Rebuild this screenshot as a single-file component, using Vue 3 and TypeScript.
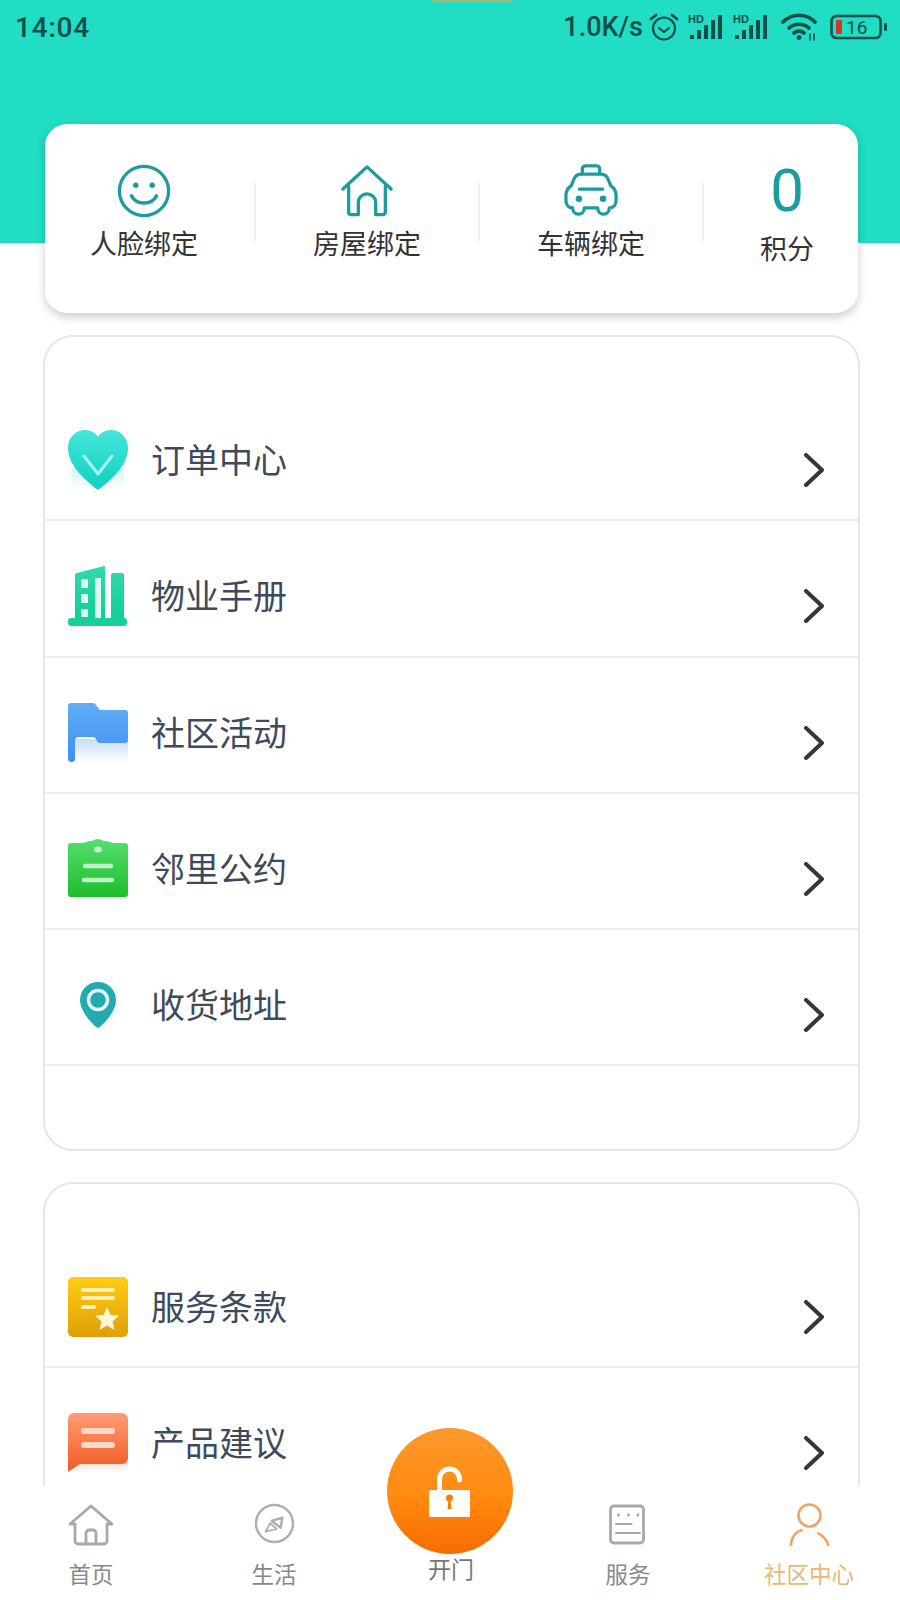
<script setup lang="ts">
const bindings = [
  { key: 'face', label: '人脸绑定' },
  { key: 'house', label: '房屋绑定' },
  { key: 'car', label: '车辆绑定' },
]

const groupOne = [
  { key: 'heart', label: '订单中心' },
  { key: 'building', label: '物业手册' },
  { key: 'flag', label: '社区活动' },
  { key: 'clipboard', label: '邻里公约' },
  { key: 'pin', label: '收货地址' },
]

const groupTwo = [
  { key: 'terms', label: '服务条款' },
  { key: 'bubble', label: '产品建议' },
]

const groups = [
  { id: 'a', rows: groupOne },
  { id: 'b', rows: groupTwo },
]
</script>

<template>
  <div class="page">
    <i class="notch"></i>
    <main class="content">
      <header class="hero">
        <div class="status">
          <span class="clock">14:04</span>
          <div class="status-right">
            <span class="speed">1.0K/s</span>
            <svg class="st-alarm" viewBox="0 0 30 30" fill="none" stroke="#0e4f4a" stroke-width="2.2">
              <circle cx="15" cy="16.5" r="11" />
              <path d="M10 16l5 4 5-4" stroke-linecap="round" stroke-linejoin="round" />
              <path d="M2 7l5-4M28 7l-5-4" stroke-width="2.8" stroke-linecap="round" />
            </svg>
            <svg v-for="n in 2" :key="n" class="st-signal" viewBox="0 0 36 28">
              <text x="0" y="10" class="hd">HD</text>
              <rect x="2" y="22" width="4" height="4" fill="#0e4f4a" />
              <rect x="9" y="17" width="4" height="9" fill="#0e4f4a" />
              <rect x="16" y="12" width="4" height="14" fill="#0e4f4a" />
              <rect x="23" y="7" width="4" height="19" fill="#0e4f4a" />
              <rect x="30" y="2" width="4" height="24" fill="#0e4f4a" />
            </svg>
            <svg class="st-wifi" viewBox="0 0 38 28" fill="none" stroke="#0e4f4a" stroke-width="3.6" stroke-linecap="round">
              <path d="M2 9C11 0 25 0 34 9" />
              <path d="M8 15c6-5 14-5 20 0" />
              <path d="M13 20c3-2.500 7-2.500 10 0" />
              <circle cx="18" cy="24.500" r="2.400" fill="#0e4f4a" stroke="none" />
              <path d="M29 21v6M33 21v6" stroke-width="1.600" />
            </svg>
            <svg class="st-battery" viewBox="0 0 58 26">
              <rect x="1.500" y="2" width="49" height="22" rx="5" fill="none" stroke="#0e4f4a" stroke-width="2.600" />
              <rect x="6" y="6" width="6" height="14" rx="1" fill="#d8332b" />
              <text x="16" y="20" class="batt">16</text>
              <rect x="54" y="9" width="3" height="8" rx="1.500" fill="#0e4f4a" />
            </svg>
          </div>
        </div>
      </header>

      <section class="bind-card">
        <template v-for="(b, i) in bindings" :key="b.key">
          <div class="bind-cell" :class="{ first: i === 0 }">
            <svg class="bind-icon" viewBox="0 0 56 56" fill="none" stroke="#1c9c9c" stroke-width="3.400" stroke-linecap="round" stroke-linejoin="round">
              <template v-if="b.key === 'face'">
                <circle cx="28" cy="28" r="25.500" />
                <circle cx="19.500" cy="22" r="2.800" fill="#1c9c9c" stroke="none" />
                <circle cx="36.500" cy="22" r="2.800" fill="#1c9c9c" stroke="none" />
                <path d="M15 33c5 10 21 10 26 0" stroke-width="3.600" />
              </template>
              <template v-else-if="b.key === 'house'">
                <path d="M3 26L28 3l25 23" />
                <path d="M9 23v27a2.500 2.500 0 0 0 2.500 2.500H19V40a9 9 0 0 1 18 0v12.500h7.500A2.500 2.500 0 0 0 47 50V23" />
              </template>
              <template v-else>
                <path d="M19 10V5a3 3 0 0 1 3-3h12a3 3 0 0 1 3 3v5" />
                <path d="M18 10.500h20c4 0 7 2.500 8 6l2.500 6c3.500 2.500 5.500 6 5.500 10v5c0 5-3 8-7 8 0 4-2.500 6.500-6 6.500s-6-2.500-6-6.500H21c0 4-2.500 6.500-6 6.500s-6-2.500-6-6.500c-4 0-7-3-7-8v-5c0-4 2-7.500 5.500-10l2.500-6c1-3.500 4-6 8-6z" />
                <path d="M16 26h24" />
                <circle cx="15.500" cy="36" r="3.400" fill="#1c9c9c" stroke="none" />
                <circle cx="40.500" cy="36" r="3.400" fill="#1c9c9c" stroke="none" />
              </template>
            </svg>
            <span class="bind-label">{{ b.label }}</span>
          </div>
          <i class="sep"></i>
        </template>
        <div class="bind-cell points">
          <span class="points-num">0</span>
          <span class="bind-label">积分</span>
        </div>
      </section>

      <section v-for="g in groups" :key="g.id" class="list-card">
        <div v-for="r in g.rows" :key="r.key" class="row">
          <svg class="row-icon" viewBox="0 0 60 60">
            <defs>
              <linearGradient :id="'grad-' + r.key" x1="0" y1="0" x2="0" y2="1">
                <stop v-if="r.key === 'heart'" offset="0" stop-color="#45e6da" />
                <stop v-if="r.key === 'heart'" offset="1" stop-color="#0fd0c0" />
                <stop v-if="r.key === 'building'" offset="0" stop-color="#35d9ae" />
                <stop v-if="r.key === 'building'" offset="1" stop-color="#0ecf98" />
                <stop v-if="r.key === 'flag'" offset="0" stop-color="#63aef5" />
                <stop v-if="r.key === 'flag'" offset="1" stop-color="#3b8ff5" />
                <stop v-if="r.key === 'clipboard'" offset="0" stop-color="#55de70" />
                <stop v-if="r.key === 'clipboard'" offset="1" stop-color="#1fbd2b" />
                <stop v-if="r.key === 'terms'" offset="0" stop-color="#ffcd14" />
                <stop v-if="r.key === 'terms'" offset="1" stop-color="#e09f06" />
                <stop v-if="r.key === 'bubble'" offset="0" stop-color="#ff9d74" />
                <stop v-if="r.key === 'bubble'" offset="1" stop-color="#f05a22" />
              </linearGradient>
              <linearGradient :id="'fade-' + r.key" x1="0" y1="0" x2="0" y2="1">
                <stop offset="0" :stop-color="r.key === 'heart' ? '#d2f8f2' : r.key === 'flag' ? '#c6def9' : '#fbd5c4'" />
                <stop offset="1" stop-color="#fff" />
              </linearGradient>
            </defs>
            <template v-if="r.key === 'heart'">
              <rect x="4" y="38" width="52" height="22" :fill="'url(#fade-heart)'" />
              <path :fill="'url(#grad-heart)'" d="M30 60C20 52 0 37 0 18 0 7 8 0 17 0c6 0 11 3 13 7 2-4 7-7 13-7 9 0 17 7 17 18 0 19-20 34-30 42z" />
              <path d="M16 26l14 18 14-18" fill="none" stroke="#a8f3ea" stroke-width="3" stroke-linecap="round" stroke-linejoin="round" />
            </template>
            <template v-else-if="r.key === 'building'">
              <path :fill="'url(#grad-building)'" d="M7 9a2 2 0 0 1 2-2L36 0a1 1 0 0 1 1 1v52H7zM43 9a2 2 0 0 1 2-2h9a2 2 0 0 1 2 2v44H43z" />
              <rect x="0" y="52" width="59" height="8" rx="3" fill="#16cf9b" />
              <rect x="27" y="12" width="6" height="40" fill="#dff8f0" />
              <rect x="13" y="13" width="7" height="9" fill="#dff8f0" />
              <rect x="13" y="28" width="7" height="9" fill="#dff8f0" />
              <rect x="13" y="43" width="7" height="8" fill="#dff8f0" />
            </template>
            <template v-else-if="r.key === 'flag'">
              <rect x="7" y="36" width="53" height="24" :fill="'url(#fade-flag)'" />
              <path :fill="'url(#grad-flag)'" d="M3 0h22a4 4 0 0 1 3 2l3 4a2 2 0 0 0 2 1h24a3 3 0 0 1 3 3v27a3 3 0 0 1-3 3H32a3 3 0 0 1-3-2l-1-2a4 4 0 0 0-3-2H11a4 4 0 0 0-4 4v18a3 3 0 0 1-3.500 3A3.500 3.500 0 0 1 0 56V3a3 3 0 0 1 3-3z" />
            </template>
            <template v-else-if="r.key === 'clipboard'">
              <path :fill="'url(#grad-clipboard)'" d="M3 4h10c4 0 6-2 10-2 2 0 4-2 7-2s5 2 7 2c4 0 6 2 10 2h10a3 3 0 0 1 3 3v48a3 3 0 0 1-3 3H3a3 3 0 0 1-3-3V7a3 3 0 0 1 3-3z" />
              <ellipse cx="30" cy="10.500" rx="4" ry="3" fill="#bdf2c6" />
              <path d="M17 27h26M16 41h28" stroke="#bdf2c6" stroke-width="4.500" stroke-linecap="round" />
            </template>
            <template v-else-if="r.key === 'pin'">
              <path fill="#22aab0" d="M30 53c-2 0-18-15-18-28a18 18 0 0 1 36 0c0 13-16 28-18 28z" />
              <circle cx="30" cy="25" r="9.500" fill="#22aab0" stroke="#e6f7f7" stroke-width="3.500" />
            </template>
            <template v-else-if="r.key === 'terms'">
              <rect width="60" height="60" rx="5" :fill="'url(#grad-terms)'" />
              <path d="M15 13h30M15 21h30M15 30h11" stroke="#ffefb0" stroke-width="4" stroke-linecap="round" />
              <path fill="#fff6d8" d="M39 30l3.500 8 8.500.8-6.400 5.700 1.900 8.500-7.500-4.400-7.500 4.400 1.900-8.500-6.400-5.700 8.500-.8z" />
            </template>
            <template v-else>
              <rect x="6" y="46" width="54" height="14" :fill="'url(#fade-bubble)'" />
              <path :fill="'url(#grad-bubble)'" d="M6 0h48a6 6 0 0 1 6 6v39a6 6 0 0 1-6 6H12L0 59V6a6 6 0 0 1 6-6z" />
              <path d="M16 18h28M16 32h28" stroke="#ffd9c8" stroke-width="6" stroke-linecap="round" />
            </template>
          </svg>
          <span class="row-label">{{ r.label }}</span>
          <svg class="chevron" viewBox="0 0 22 34" fill="none" stroke="#33363b" stroke-width="4" stroke-linecap="round" stroke-linejoin="round">
            <path d="M3 2l16 15L3 32" />
          </svg>
        </div>
      </section>
    </main>

    <nav class="tabbar">
      <div class="tab">
        <svg class="tab-icon" viewBox="0 0 46 44" fill="none" stroke="#a8a8a8" stroke-width="2.800" stroke-linecap="round" stroke-linejoin="round">
          <path d="M23 3L2 21h5v17a3 3 0 0 0 3 3h26a3 3 0 0 0 3-3V21h5z" />
          <path d="M18 41V30a3 3 0 0 1 3-3h4a3 3 0 0 1 3 3v11" />
        </svg>
        <span>首页</span>
      </div>
      <div class="tab">
        <svg class="tab-icon" viewBox="0 0 46 44" fill="none" stroke="#aeaeae" stroke-width="2.400" stroke-linejoin="round">
          <circle cx="23.500" cy="20.500" r="18.500" />
          <path d="M20.700 18l10.600-3.300-1.600 10z" stroke-width="2.400" />
          <path d="M14.700 28.700L19 20.300l6.700 5.700z" stroke-width="1.800" />
        </svg>
        <span>生活</span>
      </div>
      <div class="tab center">
        <div class="open-btn">
          <svg class="lock" viewBox="0 0 42 54">
            <path d="M10.500 28V14a10 10 0 0 1 20 0v1" fill="none" stroke="#fff" stroke-width="5" stroke-linecap="round" />
            <rect x="0" y="25" width="41" height="27" rx="1.500" fill="#fff" />
            <circle cx="20.500" cy="33" r="3.500" fill="#f57c06" />
            <path d="M19.500 35l-1 9h4l-1-9z" fill="#f57c06" />
          </svg>
        </div>
        <span>开门</span>
      </div>
      <div class="tab">
        <svg class="tab-icon" viewBox="0 0 46 44" fill="none" stroke="#a8a8a8" stroke-width="2.800" stroke-linecap="round">
          <rect x="5.500" y="3" width="33" height="37" rx="3.500" />
          <path d="M13.300 12h.2M23.300 12h.2M32.700 12h.2" stroke-width="2.800" />
          <path d="M11 21h15.500M11 30h24" stroke-width="2" />
        </svg>
        <span>服务</span>
      </div>
      <div class="tab active">
        <svg class="tab-icon" viewBox="0 0 46 44" fill="none" stroke="#efa664" stroke-width="2.600" stroke-linecap="round">
          <circle cx="23.500" cy="12.500" r="11" />
          <path d="M15.700 27C9 29 5.500 35 4.700 42M32.300 30.300c4.700 2.700 8.700 6.700 10 11.700" />
        </svg>
        <span>社区中心</span>
      </div>
    </nav>
  </div>
</template>

<style scoped>
.page {
  position: relative;
  width: 900px;
  height: 1600px;
  display: flex;
  flex-direction: column;
  overflow: hidden;
  background: #fff;
  font-family: 'Noto Sans', 'Noto Sans CJK SC', sans-serif;
}

.notch {
  position: absolute;
  left: 432px;
  top: 0;
  width: 80px;
  height: 2px;
  background: #a9b67a;
  z-index: 2;
}

.content {
  flex: 1;
  min-height: 0;
  overflow: hidden;
}

.hero {
  height: 243px;
  background: #20ddc3;
}

.status {
  display: flex;
  justify-content: space-between;
  align-items: center;
  height: 54px;
  padding: 0 12px 0 15px;
  color: #0e4f4a;
}

.clock {
  font-family: Roboto, sans-serif;
  font-size: 28px;
  font-weight: 500;
  letter-spacing: 0.8px;
}

.status-right {
  display: flex;
  align-items: center;
}

.speed {
  font-family: Roboto, sans-serif;
  font-size: 27px;
  font-weight: 500;
  margin-right: 6px;
}

.st-alarm {
  width: 30px;
  height: 30px;
  margin-right: 9px;
}

.st-signal {
  width: 36px;
  height: 28px;
  margin-right: 9px;
}

.st-signal .hd {
  font-family: 'Liberation Sans', sans-serif;
  font-size: 11px;
  font-weight: 700;
  fill: #0e4f4a;
}

.st-wifi {
  width: 38px;
  height: 28px;
  margin: 0 11px 0 3px;
}

.st-battery {
  width: 58px;
  height: 26px;
}

.st-battery .batt {
  font-family: Roboto, sans-serif;
  font-size: 19px;
  fill: #0e4f4a;
}

.bind-card {
  position: relative;
  display: flex;
  align-items: flex-start;
  width: 813px;
  height: 189px;
  margin: -119px 0 0 45px;
  padding-top: 40px;
  box-sizing: border-box;
  background: #fff;
  border-radius: 22px;
  box-shadow: 0 4px 10px rgba(0, 0, 0, 0.2);
}

.bind-cell {
  display: flex;
  flex-direction: column;
  align-items: center;
  width: 222px;
}

.bind-cell.first {
  width: 209px;
  padding-right: 11px;
  box-sizing: border-box;
}

.bind-cell.points {
  flex: 1;
  padding-left: 12px;
}

.bind-icon {
  width: 54px;
  height: 54px;
}

.bind-label {
  margin-top: 7px;
  font-size: 27px;
  line-height: 38px;
  color: #333;
}

.sep {
  flex: none;
  width: 2px;
  height: 58px;
  margin-top: 19px;
  background: #efefef;
}

.points-num {
  font-family: Roboto, sans-serif;
  font-size: 60px;
  font-weight: 400;
  line-height: 54px;
  color: #1c9c9c;
}

.points .bind-label {
  margin-top: 12px;
}

.list-card {
  width: 817px;
  margin: 22px 0 0 43px;
  padding: 48px 0 83px;
  box-sizing: border-box;
  background: #fff;
  border: 2px solid #e6e6e6;
  border-radius: 30px;
}

.list-card + .list-card {
  margin-top: 31px;
  padding-top: 47.5px;
}

.row {
  display: flex;
  align-items: center;
  height: 136.25px;
  padding: 16px 33px 0 23px;
  box-sizing: border-box;
  border-bottom: 2px solid #ececec;
}

.row-icon {
  flex: none;
  width: 60px;
  height: 60px;
}

.row-label {
  flex: 1;
  margin-left: 23px;
  font-size: 34px;
  line-height: 48px;
  color: #3d4a5c;
}

.chevron {
  flex: none;
  width: 22px;
  height: 34px;
  margin-top: 20px;
}

.tabbar {
  flex: none;
  position: relative;
  display: grid;
  grid-template-columns: 182px 184px 170px 184px 176px;
  height: 114px;
  background: #fff;
}

.tab {
  display: flex;
  flex-direction: column;
  align-items: center;
  padding-top: 17px;
  font-size: 22.500px;
  line-height: 32px;
  color: #888;
}

.tab-icon {
  width: 46px;
  height: 44px;
  margin-bottom: 12px;
}

.tab.active {
  color: #ecb870;
  padding-left: 2px;
}

.tab.center {
  padding-top: 67px;
  font-size: 23px;
  color: #777;
}

.open-btn {
  position: absolute;
  left: 387px;
  top: -58px;
  width: 126px;
  height: 126px;
  display: flex;
  align-items: center;
  justify-content: center;
  border-radius: 50%;
  background: linear-gradient(180deg, #fb9a2b 0%, #ff8a10 55%, #f96b02 100%);
}

.lock {
  width: 42px;
  height: 54px;
  margin-top: 2px;
}
</style>

<style>
html,
body {
  margin: 0;
  background: #fff;
}
</style>
